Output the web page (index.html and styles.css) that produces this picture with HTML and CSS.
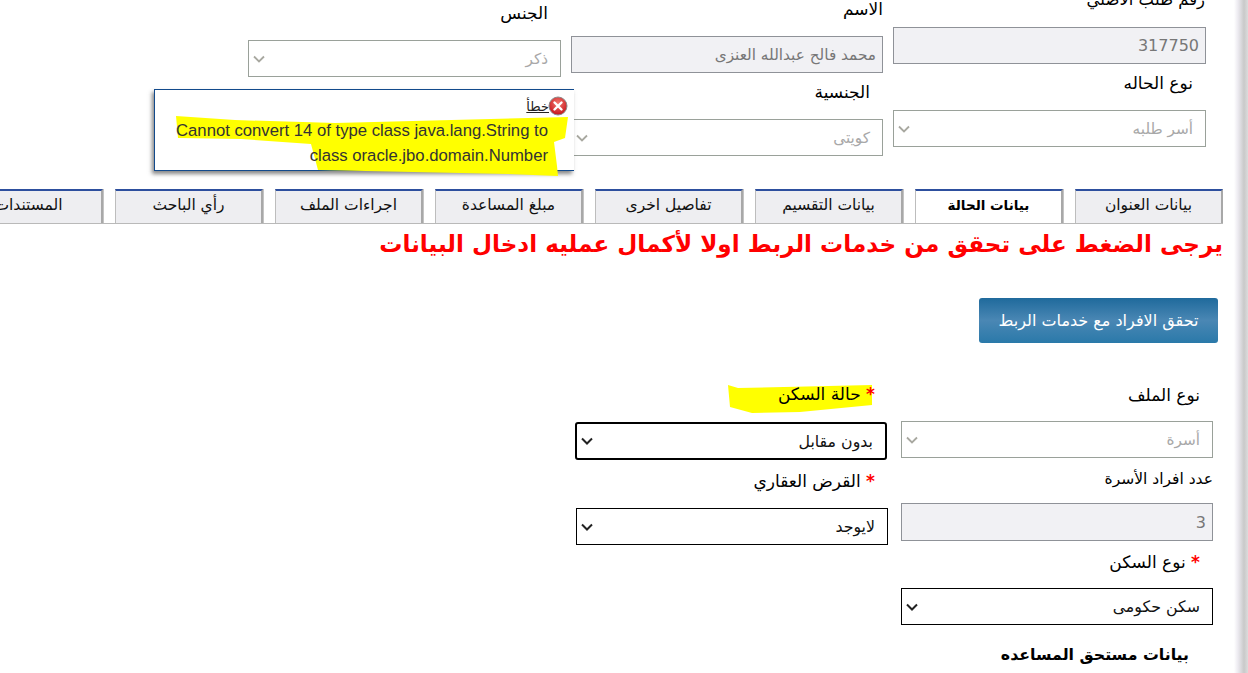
FILE: index.html
```html
<!DOCTYPE html>
<html lang="ar" dir="rtl">
<head>
<meta charset="utf-8">
<title>بيانات الحالة</title>
<link rel="stylesheet" href="styles.css">
</head>
<body>
<div class="page">
  <section class="top">
    <div class="col col-a">
      <div class="label">رقم طلب الأصلي</div>
      <div class="control readonly num">317750</div>
      <div class="label after inset">نوع الحاله</div>
      <div class="control select muted"><span>أسر طلبه</span><svg class="chev" viewBox="0 0 12 8"><path d="M1 1.5l5 5 5-5"/></svg></div>
    </div>
    <div class="col col-b">
      <div class="label flush">الاسم</div>
      <div class="control readonly">محمد فالح عبدالله العنزى</div>
      <div class="label after inset">الجنسية</div>
      <div class="control select muted"><span>كويتى</span><svg class="chev" viewBox="0 0 12 8"><path d="M1 1.5l5 5 5-5"/></svg></div>
    </div>
    <div class="col col-c">
      <div class="label inset">الجنس</div>
      <div class="control select muted"><span>ذكر</span><svg class="chev" viewBox="0 0 12 8"><path d="M1 1.5l5 5 5-5"/></svg></div>
    </div>
  </section>

  <div class="popup">
    <svg class="mark mark-popup" viewBox="0 0 420 90" aria-hidden="true"><path d="M21 26L80 30 180 33 413 27 410 48 399 52 402 76 403 86 353 84 163 80 156 54 86 49 23 48z"/></svg>
    <div class="popup-head">
      <svg class="err" viewBox="0 0 20 20" aria-hidden="true">
        <defs><radialGradient id="errfill" cx="50%" cy="35%" r="65%"><stop offset="0" stop-color="#f47a70"/><stop offset="1" stop-color="#c4121a"/></radialGradient></defs>
        <circle cx="10" cy="10" r="9" fill="url(#errfill)" stroke="#8b8b8b" stroke-width="1"/>
        <path d="M6.5 6.5l7 7M13.5 6.5l-7 7" stroke="#fff" stroke-width="2.4" stroke-linecap="round"/>
      </svg>
      <span class="popup-title">خطأ</span>
    </div>
    <p class="popup-text">Cannot convert 14 of type class java.lang.String to class oracle.jbo.domain.Number</p>
  </div>

  <nav class="tabs">
    <a class="tab">بيانات العنوان</a>
    <a class="tab active">بيانات الحالة</a>
    <a class="tab">بيانات التقسيم</a>
    <a class="tab">تفاصيل اخرى</a>
    <a class="tab">مبلغ المساعدة</a>
    <a class="tab">اجراءات الملف</a>
    <a class="tab">رأي الباحث</a>
    <a class="tab">المستندات</a>
  </nav>

  <h2 class="warning">يرجى الضغط على تحقق من خدمات الربط اولا لأكمال عمليه ادخال البيانات</h2>

  <button class="verify" type="button">تحقق الافراد مع خدمات الربط</button>

  <section class="bottom">
    <div class="col">
      <div class="label inset l1">نوع الملف</div>
      <div class="control select muted m1"><span>أسرة</span><svg class="chev" viewBox="0 0 12 8"><path d="M1 1.5l5 5 5-5"/></svg></div>
      <div class="label flush l2 small">عدد افراد الأسرة</div>
      <div class="control readonly num tall">3</div>
      <div class="label inset l2"><span class="star">*</span> نوع السكن</div>
      <div class="control select dark"><span>سكن حكومى</span><svg class="chev" viewBox="0 0 12 8"><path d="M1 1.5l5 5 5-5"/></svg></div>
      <div class="heading">بيانات مستحق المساعده</div>
    </div>
    <div class="col">
      <div class="label inset marked">
        <svg class="mark mark-label" viewBox="0 0 144 28" aria-hidden="true"><path d="M0 0L10 3 144 0 144 20 72 27 24 28 2 22z"/></svg>
        <span class="label-text"><span class="star">*</span> حالة السكن</span>
      </div>
      <div class="control select dark focused tall"><span>بدون مقابل</span><svg class="chev" viewBox="0 0 12 8"><path d="M1 1.5l5 5 5-5"/></svg></div>
      <div class="label inset l2"><span class="star">*</span> القرض العقاري</div>
      <div class="control select dark"><span>لايوجد</span><svg class="chev" viewBox="0 0 12 8"><path d="M1 1.5l5 5 5-5"/></svg></div>
    </div>
  </section>
</div>
</body>
</html>
```
FILE: styles.css
```css
* { box-sizing: border-box; }
html, body { margin: 0; padding: 0; height: 673px; overflow: hidden; background: #fff; }
body { font-family: "DejaVu Sans", "Liberation Sans", sans-serif; font-size: 14px; color: #111; }

.page {
  position: relative;
  width: 1248px;
  height: 673px;
  overflow: hidden;
  background: linear-gradient(to right, #fff 1234px, #eceaf0 1238px, #c9c9c9 1244px, #dcdcdc 1248px);
}

/* Top form */
.top {
  display: grid;
  grid-template-columns: 313px 312px 313px;
  column-gap: 10px;
  height: 189px;
  padding-right: 42px;
}
.col { display: flex; flex-direction: column; }
.col-a { margin-top: -10px; }
.col-b { margin-top: -1px; }
.col-c { margin-top: 3px; }

.label {
  height: 20px;
  line-height: 20px;
  font-size: 17px;
  color: #000;
  margin-bottom: 17px;
  white-space: nowrap;
}
.label.after { margin-top: 9px; }
.label.small { font-size: 15.5px; }
.inset { padding-right: 13px; }
.flush { padding-right: 0; }
.col-a > .label:first-child { padding-right: 1px; font-size: 16.4px; }

.control {
  display: flex;
  align-items: center;
  justify-content: space-between;
  height: 37px;
  padding: 0 6px 0 4px;
  border: 1px solid #9aa19a;
  background: #fff;
  font-size: 15.3px;
  white-space: nowrap;
}
.control.tall { height: 38px; }
.readonly {
  border-color: #8f9298;
  color: #777;
  background: #f1f1f4;
}
.num { font-size: 16px; }
.select span { padding-right: 6px; }
.muted { color: #a8a8a8; }
.dark { border-color: #000; color: #111; font-size: 15.8px; }
.focused { border-width: 2px; border-radius: 3px; margin: 0 1px 0 -1px; }

.chev { width: 12px; height: 8px; fill: none; stroke: #a8a8a0; stroke-width: 1.8; flex: none; }
.dark .chev { stroke: #222; stroke-width: 2; }

/* Error popup */
.popup {
  position: absolute;
  left: 154px;
  top: 89px;
  width: 420px;
  height: 82px;
  background: #fff;
  border: 1px solid #124a8c;
  border-right: 0;
  box-shadow: -2px 3px 4px rgba(70, 70, 70, .65);
  padding: 6px 6px 0 15px;
}
.mark { position: absolute; overflow: visible; }
.mark path { fill: #ffff00; }
.mark-popup { left: 0; top: 0; width: 420px; height: 90px; }
.popup-head {
  position: relative;
  display: flex;
  align-items: center;
  height: 20px;
}
.err { width: 20px; height: 20px; flex: none; }
.popup-title { font-size: 13px; color: #222; text-decoration: underline; margin-right: -1px; }
.popup-text {
  position: relative;
  margin: 2px 20px 0 0;
  font-family: "Liberation Sans", Arial, sans-serif;
  font-size: 16.7px;
  line-height: 25px;
  color: #333;
  text-align: right;
}

/* Tabs */
.tabs {
  display: flex;
  gap: 12px;
  margin-right: 25px;
  height: 35px;
  overflow: hidden;
  border-bottom: 1px solid #b9b9b9;
}
.tab {
  flex: none;
  width: 148px;
  height: 34px;
  line-height: 28px;
  text-align: center;
  font-size: 15.5px;
  color: #111;
  border-top: 2px solid #2d4f9e;
  border-left: 1px solid #bdbdbd;
  border-right: 2px solid #a8a8a8;
  box-shadow: 1px 0 0 #c4c4c4;
  background: #eeeef1;
}
.tab.active { background: #fff; font-size: 13.5px; font-weight: 700; color: #000; }

/* Warning + button */
.warning {
  margin: 0 25px 0 0;
  height: 41px;
  line-height: 40px;
  font-size: 23.1px;
  font-weight: 700;
  color: #f00;
  white-space: nowrap;
}
.verify {
  display: block;
  margin: 33px 30px 0 0;
  width: 239px;
  height: 45px;
  border: 0;
  border-radius: 3px;
  font-family: inherit;
  font-size: 16px;
  color: #fff;
  background: linear-gradient(#1f6a9c, #4a87b4 50%, #2a79a9);
}

/* Lower form */
.bottom {
  display: grid;
  grid-template-columns: 312px 312px;
  column-gap: 13px;
  padding-right: 35px;
  margin-top: 41px;
}
.bottom .col:first-child { margin-top: 1px; }
.bottom .label { margin-bottom: 0; }
.bottom .l1 { margin-bottom: 16px; }
.l2 { margin-top: 11px; }
.bottom .flush.l2 { margin-bottom: 14px; }
.bottom .inset.l2 { margin-bottom: 16px; }
.bottom .col:last-child .inset.l2 { margin-bottom: 17px; }
.bottom .marked { position: relative; margin-bottom: 18px; }
.mark-label { left: 152px; top: 1px; width: 144px; height: 28px; }
.label-text { position: relative; }
.star { color: #f00; font-weight: 700; }
.heading {
  margin-top: 20px;
  padding-right: 24px;
  height: 20px;
  line-height: 20px;
  font-size: 15.8px;
  font-weight: 700;
  color: #000;
}
```
